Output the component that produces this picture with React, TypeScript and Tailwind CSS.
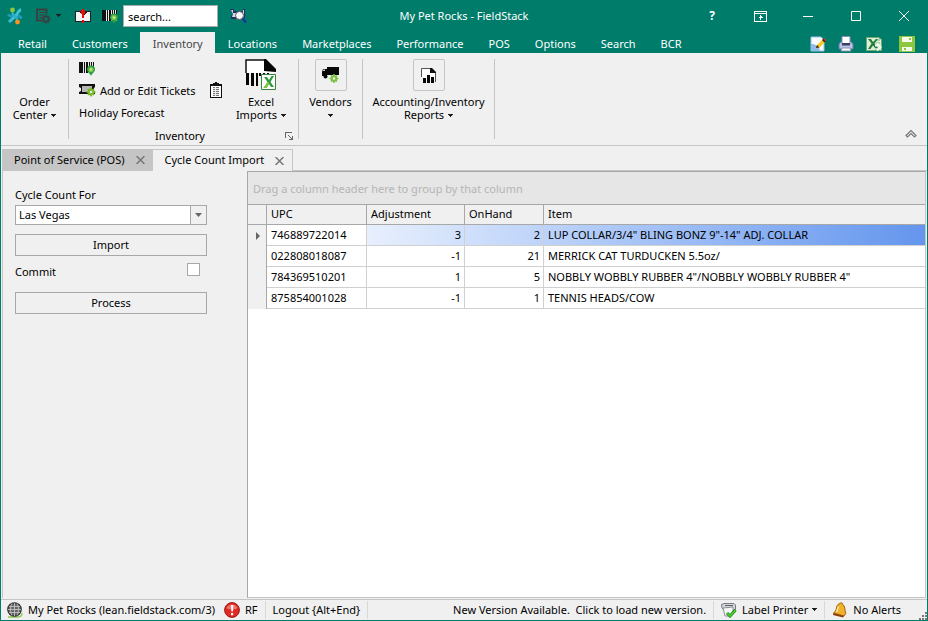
import type { ReactNode } from "react";

const menu = ["Retail", "Customers", "Inventory", "Locations", "Marketplaces", "Performance", "POS", "Options", "Search", "BCR"];

const items = [
  { upc: "746889722014", adjustment: 3, onHand: 2, item: 'LUP COLLAR/3/4" BLING BONZ 9"-14" ADJ. COLLAR' },
  { upc: "022808018087", adjustment: -1, onHand: 21, item: "MERRICK CAT TURDUCKEN 5.5oz/" },
  { upc: "784369510201", adjustment: 1, onHand: 5, item: 'NOBBLY WOBBLY RUBBER 4"/NOBBLY WOBBLY RUBBER 4"' },
  { upc: "875854001028", adjustment: -1, onHand: 1, item: "TENNIS HEADS/COW" },
];

function Caret() {
  return (
    <svg width="5" height="5" viewBox="0 0 5 5" className="ml-1 inline-block align-middle" shapeRendering="crispEdges">
      <path d="M0 0h5v1H4v1H3v1H2V2H1V1H0z" fill="#1e1e1e" />
    </svg>
  );
}

function LogoIcon() {
  return (
    <svg width="16" height="18" viewBox="0 0 16 18">
      <path d="M1 7.500c2 2.500 4 2.500 7 1.500s5 0 6.500 2.500" stroke="#219fb9" strokeWidth="2.600" fill="none" />
      <path d="M14 2.500c-3 1-3 4-5.500 6.500S4 13 2 15" stroke="#3cc0d6" strokeWidth="3" fill="none" />
      <path d="M5 5.500c1 3 4 4 5.500 7" stroke="#2cb0c8" strokeWidth="2.600" fill="none" />
      <circle cx="5.500" cy="3" r="2.400" fill="#8cc63f" />
      <circle cx="10.500" cy="15" r="2.400" fill="#f7931e" />
    </svg>
  );
}

function ReportGearIcon() {
  return (
    <svg width="15" height="16" viewBox="0 0 15 16">
      <path d="M10.500 6V1.500H1v11h5" fill="none" stroke="#3a4040" strokeWidth="1.800" />
      <path d="M3 4.500h6M3 7h5M3 9.500h3" stroke="#3a4040" />
      <circle cx="10" cy="11" r="2.600" fill="none" stroke="#3a4040" strokeWidth="1.800" />
      <path d="M10 6.500v2M10 13.500v2M5.500 11h2M12.500 11h2M6.800 7.800l1.500 1.500M11.700 12.700l1.500 1.500M13.200 7.800l-1.500 1.500M8.300 12.700l-1.500 1.500" stroke="#3a4040" strokeWidth="1.600" />
    </svg>
  );
}

function MailIcon() {
  return (
    <svg width="16" height="14" viewBox="0 0 16 14" shapeRendering="crispEdges">
      <path d="M0 2h16v11H0z" fill="#222" />
      <path d="M1 3h3l4 4 4-4h3v9H1z" fill="#f4f4f4" />
      <path d="M4 3h8L8 7z" fill="#1a1a1a" />
      <path d="M7 0h2v9H7zM7 11h2v3H7z" fill="#f00a0a" />
      <path d="M6 1h4v4H6z" fill="#f00a0a" />
    </svg>
  );
}

function BarcodePinIcon() {
  return (
    <svg width="17" height="15" viewBox="0 0 17 15">
      <path d="M0 1h15v11H0z" fill="#e8e8e8" />
      <path d="M0 1h4v11H0zM5 1h1v11H5zM7 1h2v11H7zM10 1h1v6h-1zM12 1h1v4h-1zM14 1h1v5h-1z" fill="#111" />
      <path d="M12 4.500a4 4 0 0 1 4 4c0 2.500-3 4-4 6.500-1-2.500-4-4-4-6.500a4 4 0 0 1 4-4z" fill="#2d9e48" />
      <circle cx="12" cy="8.500" r="2.600" fill="#7dc843" />
      <circle cx="12" cy="8.500" r="1" fill="#d9efc0" />
    </svg>
  );
}

function FindIcon() {
  return (
    <svg width="17" height="16" viewBox="0 0 17 16">
      <path d="M0 1h4v2h9V1h2v9h-3l-3 1H1V8l2-2z" fill="#223060" />
      <path d="M1 2h2v3h10V2h1v7H2l1-3z" fill="#d5dbe4" />
      <circle cx="9.500" cy="7.500" r="4" fill="#f8f8f8" stroke="#555b66" />
      <path d="m12.500 10.500 3.500 4" stroke="#16309a" strokeWidth="2" />
    </svg>
  );
}

function NoteIcon() {
  return (
    <svg width="16" height="16" viewBox="0 0 16 16">
      <path d="M1 1h10l3 3v11H1z" fill="#f7fbff" stroke="#9fc1de" />
      <path d="M1 8c5 0 8 2 9 7H1z" fill="#8fbce8" />
      <path d="m6 12 1-3 6-6 2.500 2.500-6 6z" fill="#f5cc19" />
      <path d="m6 12 1-3 2.500 2.500zM12 4l1.500-1.500L16 5l-1.500 1.500z" fill="#2a2020" />
      <path d="m13 3 1-1 2.500 2.500-1 1z" fill="#c33" />
    </svg>
  );
}

function PrinterIcon() {
  return (
    <svg width="16" height="16" viewBox="0 0 16 16">
      <path d="M2.500 6h11l1.500 2v5H1V8z" fill="#b9c3e6" stroke="#6c77a6" />
      <path d="M4 .500h8V8H4z" fill="#fff" stroke="#8791b6" />
      <path d="M4 7h8v2.500H4z" fill="#3c4060" />
      <path d="M4 12h8l1 3H3z" fill="#fff" stroke="#8791b6" />
    </svg>
  );
}

function ExcelIcon() {
  return (
    <svg width="16" height="16" viewBox="0 0 16 16">
      <path d="M.500 1.500h12l3 2v11h-15z" fill="#e0efda" stroke="#6faa73" />
      <path d="M9 4h5M10 7h4M10 10h4M9 13h5" stroke="#7bb77e" />
      <path d="M2 3h3l2 3 3-3h2L8.500 7.500 12 12h-3L7 9.500 4.500 13H2l3.500-5.500z" fill="#23803a" />
      <path d="M9 9.500h3M11 7.500l3.500 3.500-3.500 3.500" fill="none" stroke="#f3faf0" strokeWidth="2" />
    </svg>
  );
}

function SaveIcon() {
  return (
    <svg width="16" height="16" viewBox="0 0 16 16" shapeRendering="crispEdges">
      <path d="M0 0h15l1 1v15H0z" fill="#8dc63f" />
      <path d="M3 1h10v5H3zM3 11h10v4H3z" fill="#f4f9ec" />
      <path d="M10 2h2v2h-2zM5 12h2v2H5z" fill="#8dc63f" />
    </svg>
  );
}

function TicketIcon() {
  return (
    <svg width="17" height="14" viewBox="0 0 17 14">
      <path d="M0 1h16v3l-1 1v3l1 1v2H0V9l2-1V5L0 4z" fill="#111" />
      <path d="M3 3h10v6H3z" fill="#b5b5b5" />
      <circle cx="12" cy="9" r="3.500" fill="#76b82a" />
      <path d="M12 4.500v9M7.500 9h9M9 6l6 6M15 6l-6 6" stroke="#76b82a" strokeWidth="1.600" />
      <circle cx="12" cy="9" r="1.300" fill="#e3f2cf" />
    </svg>
  );
}

function ClipboardIcon() {
  return (
    <svg width="12" height="16" viewBox="0 0 12 16" shapeRendering="crispEdges">
      <path d="M5 0h2v1h2v2H3V1h2z" fill="#111" />
      <path d="M.5 2.500h11v13H.5z" fill="#fff" stroke="#111" />
      <path d="M1 2h10v2H1z" fill="#111" />
      <path d="M3 5h6v9H3z" fill="#777" />
      <path d="M3 6h6v1H3zM3 8h6v1H3zM3 10h6v1H3zM3 12h6v1H3zM5 5h1v9H5z" fill="#eee" />
    </svg>
  );
}

function ExcelImportIcon() {
  return (
    <svg width="32" height="32" viewBox="0 0 32 32">
      <path d="M1 14V1h18l11 13z" fill="#fff" />
      <path d="M1 14V1h19" fill="none" stroke="#111" strokeWidth="1.500" />
      <path d="M19 0h2l10 10v3l-12-1z" fill="#050505" />
      <path d="M1 14h3v12H1zM6 14h3v13H6zM11 14h2v13h-2zM14 14h2v3h-2zM18 14h2v2h-2zM22 14h2v2h-2z" fill="#050505" />
      <path d="M16.500 15.500h14v15h-14z" fill="#fff" stroke="#37823d" />
      <path d="M19 18h3l2 3 2.500-4H29l-3.500 6 3.500 5h-3l-2-3-2.500 4H18.500l4-6z" fill="#2f9a3d" />
      <path d="m18.500 29 4-6 2 1-3 5z" fill="#8ac53f" />
    </svg>
  );
}

function TruckIcon() {
  return (
    <svg width="17" height="16" viewBox="0 0 17 16">
      <path d="M5 0h12v8H5zM0 5l1-3h4v7H0z" fill="#080808" />
      <path d="M1 4l.500-1.500H3V4z" fill="#ddd" />
      <circle cx="3.500" cy="9.500" r="2" fill="#080808" />
      <circle cx="12" cy="11.500" r="3.300" fill="#7ac142" />
      <path d="M12 7v9M7.500 11.500h9M9 8.500l6 6M15 8.500l-6 6" stroke="#7ac142" strokeWidth="1.600" />
      <circle cx="12" cy="11.500" r="1.200" fill="#f0f7e6" />
    </svg>
  );
}

function ReportIcon() {
  return (
    <svg width="16" height="17" viewBox="0 0 16 17">
      <path d="M1 10V1h9l4.500 4.500V14" fill="#fff" />
      <path d="M.5 10V1.500H10M14.500 5v10" fill="none" stroke="#555" />
      <path d="M9 1h2l4 4v1H9z" fill="#111" />
      <path d="M2 11h3v5H2zM6 8h3v8H6zM10 10h3v6h-3z" fill="#080808" />
    </svg>
  );
}

function GlobeIcon() {
  return (
    <svg width="16" height="16" viewBox="0 0 16 16">
      <path d="M1 15h10c3 0 4-1 4-4" fill="none" stroke="#8bc34a" strokeWidth="1.300" />
      <circle cx="7.500" cy="7.500" r="6.700" fill="#666" stroke="#333" strokeWidth="1.300" />
      <path d="M1 7.500h13M2 4.500h11M2 10.500h11M7.500 1v13M5 1.500c-2 3-2 9 0 12M10 1.500c2 3 2 9 0 12" fill="none" stroke="#ccc" strokeWidth=".8" />
    </svg>
  );
}

function AlertIcon() {
  return (
    <svg width="16" height="16" viewBox="0 0 16 16">
      <circle cx="8" cy="8" r="7.400" fill="#e02a25" stroke="#9c1512" />
      <path d="M2.500 6a6 6 0 0 1 11 0c-3 2-8 2-11 0z" fill="#f0726c" />
      <path d="M7 3h2.400L9 9.500H7.400zM7 11h2.200v2.200H7z" fill="#fff" />
    </svg>
  );
}

function LabelPrinterIcon() {
  return (
    <svg width="16" height="16" viewBox="0 0 16 16">
      <path d="M.5 2.500 3 1.500h10l1.500 1.500V8L4 9 1 6z" fill="#d5d8db" stroke="#777c80" />
      <path d="m2 6 10-1v6l-2 3H4z" fill="#f6f7f8" stroke="#8b9094" />
      <path d="M4 3.500h8" stroke="#5d6369" />
      <path d="m6 11 3 3 5.500-6" fill="none" stroke="#177a18" strokeWidth="3" />
      <path d="m6 11 3 3 5.500-6" fill="none" stroke="#4fcf3a" strokeWidth="1.700" />
    </svg>
  );
}

function BellIcon() {
  return (
    <svg width="16" height="16" viewBox="0 0 16 16">
      <path d="M8 1.500c1-1.500 3-.500 2.800 1 2.500 1.500 1.700 5 3 9L12 14 1.500 11c3-2 2.500-4 3.500-7 .500-1.500 1.500-2 3-2.500z" fill="#f0b12c" stroke="#a4620d" />
      <path d="M6.500 4.500c-1 2-1 4-2 5.500" stroke="#fde79a" strokeWidth="1.500" fill="none" />
      <path d="m1.500 11 10.500 3-1 1.500L1 13z" fill="#8d3f0c" />
    </svg>
  );
}

function WindowButton({ label, children }: { label: string; children: ReactNode }) {
  return (
    <button aria-label={label} className="flex h-8 w-12 items-center justify-center text-white">
      {children}
    </button>
  );
}

function TitleBar() {
  return (
    <header className="grid h-8 grid-cols-[1fr_auto_1fr] items-center text-white">
      <div className="flex items-center pl-[6px]">
        <LogoIcon />
        <button aria-label="Reports" className="ml-[13px] flex items-center gap-px">
          <ReportGearIcon />
          <Caret />
        </button>
        <button aria-label="Messages" className="ml-[14px]"><MailIcon /></button>
        <button aria-label="Barcode" className="ml-[11px]"><BarcodePinIcon /></button>
        <input
          aria-label="Search"
          defaultValue="search..."
          className="ml-1 h-[22px] w-[95px] border border-[#ababab] bg-white px-1 text-[11px] text-black outline-none"
        />
        <button aria-label="Find" className="ml-3"><FindIcon /></button>
      </div>
      <h1 className="text-[11px]">My Pet Rocks - FieldStack</h1>
      <div className="-mr-px flex justify-end">
        <WindowButton label="Help"><span className="text-[12px] font-bold">?</span></WindowButton>
        <WindowButton label="Ribbon display options">
          <svg width="13" height="11" viewBox="0 0 13 11" fill="none" stroke="white" shapeRendering="crispEdges">
            <path d="M.5.5h12v10H.5zM0 2.500h13M6.500 4v5M5.500 5.500h2M4.500 6.500h4" />
          </svg>
        </WindowButton>
        <WindowButton label="Minimize">
          <svg width="10" height="10" viewBox="0 0 10 10"><path d="M0 5.500h10" stroke="white" /></svg>
        </WindowButton>
        <WindowButton label="Maximize">
          <svg width="10" height="10" viewBox="0 0 10 10"><path d="M.5.5h9v9h-9z" fill="none" stroke="white" /></svg>
        </WindowButton>
        <WindowButton label="Close">
          <svg width="10" height="10" viewBox="0 0 10 10"><path d="m0 0 10 10M10 0 0 10" stroke="white" /></svg>
        </WindowButton>
      </div>
    </header>
  );
}

function MenuBar() {
  return (
    <nav className="flex h-[21px] pl-1 pr-3">
      {menu.map((name) => (
        <button
          key={name}
          className={
            name === "Inventory"
              ? "bg-[#f0f0f0] pl-[13px] pr-3 pt-[3px] text-[#444]"
              : "pl-[13px] pr-3 pt-[3px] text-white"
          }
        >
          {name}
        </button>
      ))}
      <div className="ml-auto flex items-end gap-3 pb-px">
        <button aria-label="Edit note"><NoteIcon /></button>
        <button aria-label="Print"><PrinterIcon /></button>
        <button aria-label="Export to Excel"><ExcelIcon /></button>
        <button aria-label="Save" className="ml-[5px]"><SaveIcon /></button>
      </div>
    </nav>
  );
}

function Ribbon() {
  return (
    <section className="flex h-[93px] border-b border-[#c5c5c5] pb-[6px] pt-[6px] leading-[13px]">
      <button className="flex w-[68px] flex-col items-center border-r border-[#c5c5c5] pt-9">
        <span>Order</span>
        <span>Center<Caret /></span>
      </button>
      <div className="flex w-[230px] flex-col border-r border-[#c5c5c5]">
        <div className="-mt-[2px] flex h-[72px] shrink-0">
          <div className="flex flex-col items-start pl-[10px]">
            <button aria-label="Barcodes" className="flex h-[22px] items-center"><BarcodePinIcon /></button>
            <button className="flex h-[22px] items-center gap-1 whitespace-nowrap"><TicketIcon />Add or Edit Tickets</button>
            <button className="flex h-[22px] items-center">Holiday Forecast</button>
          </div>
          <button aria-label="Clipboard" className="mb-[6px] ml-auto flex items-center"><ClipboardIcon /></button>
          <button className="ml-3 mr-[10px] flex w-[54px] flex-col items-center pt-[2px]">
            <span className="h-9"><ExcelImportIcon /></span>
            <span>Excel</span>
            <span>Imports<Caret /></span>
          </button>
        </div>
        <div className="flex h-[14px] items-center pl-[6px] pr-[5px]">
          <span className="flex-1 text-center">Inventory</span>
          <button aria-label="Inventory options">
            <svg width="8" height="8" viewBox="0 0 8 8" fill="none" stroke="#666" shapeRendering="crispEdges">
              <path d="M.5 6V.5H7M3 3l4 4M7.500 3.500v4h-4" />
            </svg>
          </button>
        </div>
      </div>
      <button className="flex w-16 flex-col items-center border-r border-[#c5c5c5]">
        <span className="mb-1 flex size-8 items-center justify-center rounded-xs border border-[#c5c5c5]"><TruckIcon /></span>
        <span>Vendors</span>
        <span className="pr-[5px]"><Caret /></span>
      </button>
      <button className="flex w-[132px] flex-col items-center border-r border-[#c5c5c5]">
        <span className="mb-1 flex size-8 items-center justify-center rounded-xs border border-[#c5c5c5]"><ReportIcon /></span>
        <span>Accounting/Inventory</span>
        <span>Reports<Caret /></span>
      </button>
      <button aria-label="Collapse ribbon" className="ml-auto mr-[10px] self-end">
        <svg width="12" height="10" viewBox="0 0 12 10" fill="none" stroke="#777">
          <path d="m1 6.500 5-5 5 5-1.500 1.500L6 4.500 2.500 8z" strokeWidth="1.200" />
        </svg>
      </button>
    </section>
  );
}

function CloseTab({ label }: { label: string }) {
  return (
    <button aria-label={label}>
      <svg width="9" height="8" viewBox="0 0 9 8"><path d="m.5 0 8 8M8.500 0l-8 8" stroke="#777" strokeWidth="1.500" /></svg>
    </button>
  );
}

function DocumentTabs() {
  return (
    <div className="flex h-[25px] items-end pl-px pt-[3px]">
      <div className="flex h-[22px] items-center gap-[11px] border-y border-[#c5c5c5] bg-[#c5c5c5] pl-3 pr-2">
        <span>Point of Service (POS)</span>
        <CloseTab label="Close Point of Service" />
      </div>
      <div className="flex h-[22px] items-center gap-[11px] border-r border-t border-[#c5c5c5] pl-3 pr-2">
        <span>Cycle Count Import</span>
        <CloseTab label="Close Cycle Count Import" />
      </div>
      <div className="h-[22px] flex-1 border-b border-[#c5c5c5]" />
    </div>
  );
}

function CyclePanel() {
  return (
    <form className="ml-px flex w-[245px] shrink-0 flex-col border-l border-[#c5c5c5] pl-3 pr-10 pt-4" onSubmit={(e) => e.preventDefault()}>
      <label htmlFor="store" className="leading-[16px]">Cycle Count For</label>
      <div className="mt-[2px] flex h-5 border border-[#a8a8a8] bg-white">
        <select id="store" className="flex-1 appearance-none px-[3px] outline-none">
          <option>Las Vegas</option>
        </select>
        <span className="pointer-events-none flex w-4 items-center justify-center border-l border-[#a8a8a8] bg-[#f0f0f0]">
          <svg width="7" height="4" viewBox="0 0 7 4"><path d="M0 0h7L3.500 4z" fill="#666" /></svg>
        </span>
      </div>
      <button className="mt-[9px] h-[22px] border border-[#a8a8a8]">Import</button>
      <div className="mt-[7px] flex items-start justify-between pr-[7px]">
        <label htmlFor="commit" className="pt-px leading-[16px]">Commit</label>
        <input id="commit" type="checkbox" className="size-[13px] appearance-none border border-[#a8a8a8] bg-white checked:bg-[#666]" />
      </div>
      <button className="mt-3 h-[22px] border border-[#a8a8a8]">Process</button>
    </form>
  );
}

function ItemGrid() {
  return (
    <section className="flex min-w-0 flex-1 flex-col border border-[#a8a8a8] border-b-[#c5c5c5] border-r-[#c5c5c5] bg-white">
      <div className="flex h-[33px] items-center border-b border-[#a8a8a8] bg-[#e6e6e6] px-[5px] pt-[2px] text-[#b5b5b5]">
        Drag a column header here to group by that column
      </div>
      <table className="w-full table-fixed border-separate border-spacing-0">
        <thead>
          <tr className="h-5 bg-[#f0f0f0] text-left [&>th]:border-b [&>th]:border-r [&>th]:border-[#a8a8a8] [&>th]:px-1 [&>th]:py-0 [&>th]:font-normal">
            <th className="w-[19px]" aria-label="Row marker" />
            <th className="w-[100px]">UPC</th>
            <th className="w-[98px]">Adjustment</th>
            <th className="w-[79px]">OnHand</th>
            <th className="border-r-0!">Item</th>
          </tr>
        </thead>
        <tbody>
          {items.map((row, i) => (
            <tr
              key={row.upc}
              className={
                i === 0
                  ? "h-[21px] bg-linear-to-r from-[#e9f0fd] from-[17%] to-[#6495ed] [&>td]:px-1 [&>td]:py-0"
                  : "h-[21px] bg-white [&>td]:px-1 [&>td]:py-0"
              }
            >
              <td className="border-r border-[#a8a8a8] bg-[#f0f0f0] text-right">
                {i === 0 && (
                  <svg width="4" height="8" viewBox="0 0 4 8" className="ml-1 block"><path d="M0 0v8l4-4z" fill="#666" /></svg>
                )}
              </td>
              <td className="border-b border-r border-[#d0d0d0] bg-white">{row.upc}</td>
              <td className="border-b border-r border-[#d0d0d0] pr-[3px]! text-right">{row.adjustment}</td>
              <td className="border-b border-r border-[#d0d0d0] pr-[3px]! text-right">{row.onHand}</td>
              <td className="truncate border-b border-[#d0d0d0]">{row.item}</td>
            </tr>
          ))}
        </tbody>
      </table>
    </section>
  );
}

function StatusBar() {
  return (
    <footer className="flex h-[21px] items-center whitespace-nowrap border-t border-[#c5c5c5] pl-[6px]">
      <GlobeIcon />
      <span className="ml-[5px]">My Pet Rocks (lean.fieldstack.com/3)</span>
      <span className="ml-[9px]"><AlertIcon /></span>
      <span className="ml-[5px] mr-[7px]">RF</span>
      <button className="h-[18px] border-x border-[#d8d8d8] px-[7px]">Logout {"{Alt+End}"}</button>
      <button className="ml-auto mr-[7px]">New Version Available.&nbsp; Click to load new version.</button>
      <button className="flex h-[18px] items-center border-x border-[#d8d8d8] px-[7px]">
        <LabelPrinterIcon />
        <span className="ml-[5px]">Label Printer</span>
        <Caret />
      </button>
      <button className="ml-[7px] flex items-center gap-[5px]"><BellIcon />No Alerts</button>
      <svg width="8" height="8" viewBox="0 0 8 8" className="ml-[18px] self-end" fill="#777" shapeRendering="crispEdges">
        <path d="M6 0h2v2H6zM3 3h2v2H3zM6 3h2v2H6zM0 6h2v2H0zM3 6h2v2H3zM6 6h2v2H6z" />
      </svg>
    </footer>
  );
}

export default function App() {
  return (
    <div className="flex min-h-screen flex-col bg-[#007c6b] px-px pb-px font-['Noto_Sans',sans-serif] text-[11px] text-black">
      <TitleBar />
      <MenuBar />
      <div className="flex flex-1 flex-col bg-[#f0f0f0]">
        <Ribbon />
        <DocumentTabs />
        <main className="flex flex-1 pb-[1px] pr-px">
          <CyclePanel />
          <ItemGrid />
        </main>
        <StatusBar />
      </div>
    </div>
  );
}
